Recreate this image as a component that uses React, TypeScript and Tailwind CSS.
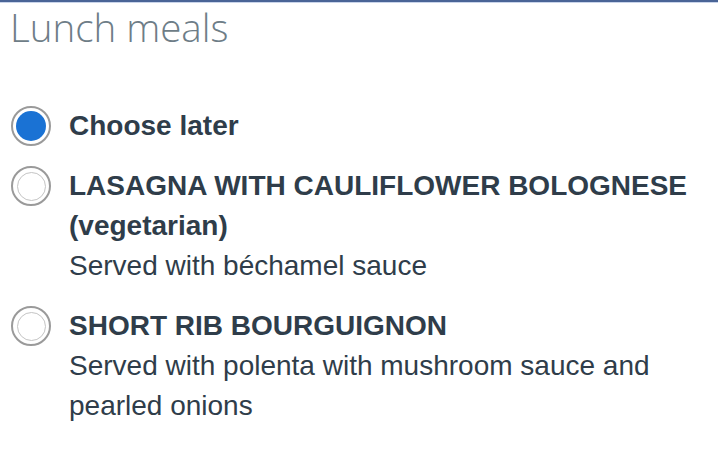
import React from "react";

function Radio({ checked }: { checked: boolean }) {
  return (
    <div className="w-[40px] h-[40px] shrink-0 rounded-full border-2 border-[#9a9a9a] bg-white flex items-center justify-center">
      {checked ? (
        <div className="w-[30px] h-[30px] rounded-full bg-[#1a72d4]" />
      ) : (
        <div className="w-[29px] h-[29px] rounded-full border-[1.5px] border-[#c4c4c4]" />
      )}
    </div>
  );
}

export default function App() {
  return (
    <div className="w-[718px] h-[452px] bg-white overflow-hidden">
      <div className="h-[2px] bg-[#4a6496]" />
      <div className="h-[1px] bg-[#c9d4ea]" />
      <div className="pl-[10px] pt-[1px] text-[38.5px] leading-[46px] font-light text-[#6e7d87]" style={{ fontFamily: '"Open Sans", sans-serif' }}>
        Lunch meals
      </div>
      <div className="pl-[11px] pt-[56px] flex flex-col gap-[20px] text-[28px] leading-[40px] text-[#2f3d4a]" style={{ fontFamily: '"Liberation Sans", Arial, sans-serif' }}>
        <div className="flex items-start gap-[18px]">
          <Radio checked />
          <div className="font-bold">Choose later</div>
        </div>
        <div className="flex items-start gap-[18px]">
          <Radio checked={false} />
          <div>
            <div className="font-bold">LASAGNA WITH CAULIFLOWER BOLOGNESE (vegetarian)</div>
            <div>Served with béchamel sauce</div>
          </div>
        </div>
        <div className="flex items-start gap-[18px]">
          <Radio checked={false} />
          <div>
            <div className="font-bold">SHORT RIB BOURGUIGNON</div>
            <div className="w-[600px]">Served with polenta with mushroom sauce and pearled onions</div>
          </div>
        </div>
      </div>
    </div>
  );
}
